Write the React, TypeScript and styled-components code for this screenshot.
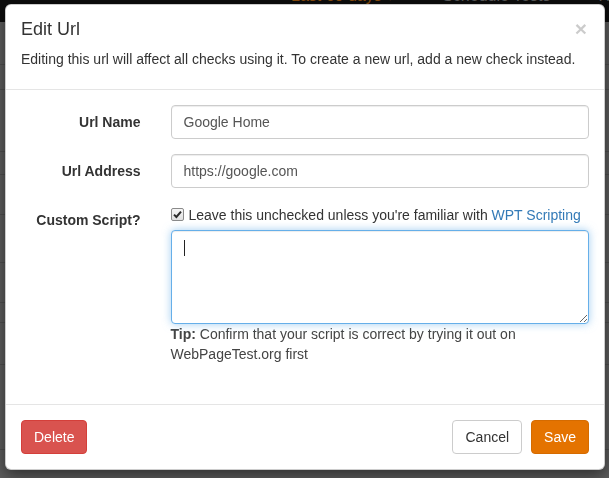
import React from 'react';
import styled, { createGlobalStyle } from 'styled-components';

const GlobalStyle = createGlobalStyle`
  html, body {
    margin: 0;
    padding: 0;
    overflow: hidden;
  }
  body {
    font-family: "Liberation Sans", Arial, Helvetica, sans-serif;
    font-size: 14px;
    line-height: 1.42857;
    color: #333;
    background: #5d5d5d;
  }
  * {
    box-sizing: border-box;
  }
`;

/* page behind the dialog, already dimmed by the backdrop */
const Page = styled.div`
  width: 609px;
  height: 478px;
  background: #5d5d5d;
  overflow: hidden;
`;

const NavBar = styled.div`
  height: 22px;
  background: #0d0d0d;
  display: flex;
  align-items: flex-start;
  padding-left: 291px;
  gap: 48px;
  overflow: hidden;
`;

const NavItem = styled.span<{ active?: boolean }>`
  margin-top: -13px;
  font-size: 16px;
  line-height: 18px;
  color: ${({ active }) => (active ? '#8a4c0c' : '#5a5a5a')};
  white-space: nowrap;
`;

const PageRow = styled.div<{ h: number }>`
  height: ${({ h }) => h}px;
  border-bottom: 1px solid #4f4f4f;
`;

const Backdrop = styled.div`
  position: fixed;
  inset: 0;
  padding: 4px 0 0 5px;
`;

const Dialog = styled.div`
  width: 600px;
  background: #fff;
  border: 1px solid rgba(0, 0, 0, 0.2);
  border-radius: 6px;
  box-shadow: 0 5px 15px rgba(0, 0, 0, 0.5);
  overflow: hidden;
`;

const Header = styled.div`
  padding: 15px;
  border-bottom: 1px solid #e5e5e5;
`;

const TitleRow = styled.div`
  display: flex;
  justify-content: space-between;
  align-items: flex-start;
`;

const Title = styled.h4`
  margin: 0;
  font-size: 18px;
  font-weight: 500;
  line-height: 1.1;
  color: #333;
`;

const Close = styled.button`
  margin: -2px 2px 0 0;
  padding: 0;
  border: 0;
  background: transparent;
  font-family: inherit;
  font-size: 21px;
  font-weight: bold;
  line-height: 1;
  color: #000;
  opacity: 0.2;
  cursor: pointer;
`;

const Intro = styled.p`
  margin: 9px 0 5px;
  line-height: 20px;
`;

const Body = styled.div`
  padding: 15px;
`;

const FormGroup = styled.div`
  display: grid;
  grid-template-columns: 119.5px 1fr;
  column-gap: 30px;
  margin-bottom: 15px;
`;

const Label = styled.label`
  padding-top: 7px;
  text-align: right;
  font-weight: bold;
  line-height: 20px;
  white-space: nowrap;
`;

const Input = styled.input`
  display: block;
  width: 100%;
  height: 34px;
  padding: 6px 12px;
  font-family: inherit;
  font-size: 14px;
  line-height: 20px;
  color: #555;
  background: #fff;
  border: 1px solid #ccc;
  border-radius: 4px;
  box-shadow: inset 0 1px 1px rgba(0, 0, 0, 0.075);
  outline: none;
`;

const CheckRow = styled.label`
  display: flex;
  align-items: center;
  gap: 5px;
  margin: 2px 0 5px;
  line-height: 20px;
  white-space: nowrap;
`;

const CheckBox = styled.span`
  display: inline-flex;
  align-items: center;
  justify-content: center;
  width: 13px;
  height: 13px;
  margin-top: -1px;
  border: 1px solid #8a8a8a;
  border-radius: 2px;
  background: linear-gradient(#f6f6f6, #e0e0e0);
`;

const Link = styled.a`
  color: #337ab7;
  text-decoration: none;
`;

const ScriptBox = styled.div`
  position: relative;
`;

const TextArea = styled.textarea`
  display: block;
  width: 100%;
  height: 94px;
  padding: 6px 12px;
  font-family: inherit;
  font-size: 14px;
  line-height: 20px;
  color: #555;
  border: 1px solid #66afe9;
  border-radius: 4px;
  box-shadow: inset 0 1px 1px rgba(0, 0, 0, 0.075), 0 0 8px rgba(102, 175, 233, 0.6);
  outline: none;
  resize: vertical;
`;

const Caret = styled.span`
  position: absolute;
  left: 13px;
  top: 10px;
  width: 1px;
  height: 16px;
  background: #222;
`;

const Help = styled.p`
  margin: 0 0 10px;
  line-height: 20px;
  color: #444;
`;

const Footer = styled.div`
  display: flex;
  align-items: center;
  padding: 15px;
  border-top: 1px solid #e5e5e5;
`;

const Spacer = styled.div`
  flex: 1;
`;

const variants = {
  danger: { bg: '#d9534f', border: '#d43f3a', color: '#fff' },
  default: { bg: '#fff', border: '#ccc', color: '#333' },
  primary: { bg: '#e47300', border: '#d56b00', color: '#fff' },
};

const Button = styled.button<{ variant: keyof typeof variants }>`
  height: 34px;
  padding: 6px 12px;
  margin-left: ${({ variant }) => (variant === 'primary' ? 9 : 0)}px;
  font-family: inherit;
  font-size: 14px;
  line-height: 20px;
  border-radius: 4px;
  border: 1px solid ${({ variant }) => variants[variant].border};
  background: ${({ variant }) => variants[variant].bg};
  color: ${({ variant }) => variants[variant].color};
  cursor: pointer;
`;

const pageRows = [43, 25, 62, 23, 40, 48, 40, 20, 42, 85];

export default function App() {
  return (
    <>
      <GlobalStyle />
      <Page>
        <NavBar>
          <NavItem active>Last 60 days ▾</NavItem>
          <NavItem>Schedule Tests</NavItem>
          <NavItem>Recent Tests</NavItem>
        </NavBar>
        {pageRows.map((h, i) => (
          <PageRow key={i} h={h} />
        ))}
      </Page>
      <Backdrop>
        <Dialog>
          <Header>
            <TitleRow>
              <Title>Edit Url</Title>
              <Close type="button">×</Close>
            </TitleRow>
            <Intro>Editing this url will affect all checks using it. To create a new url, add a new check instead.</Intro>
          </Header>
          <Body>
            <FormGroup>
              <Label>Url Name</Label>
              <Input defaultValue="Google Home" />
            </FormGroup>
            <FormGroup>
              <Label>Url Address</Label>
              <Input defaultValue="https://google.com" />
            </FormGroup>
            <FormGroup>
              <Label>Custom Script?</Label>
              <div>
                <CheckRow>
                  <CheckBox>
                    <svg width="9" height="9" viewBox="0 0 9 9">
                      <path d="M1 4.6 L3.4 7 L8 1.6" fill="none" stroke="#2b2b2b" strokeWidth="2" />
                    </svg>
                  </CheckBox>
                  <span>
                    Leave this unchecked unless you're familiar with <Link href="#">WPT Scripting</Link>
                  </span>
                </CheckRow>
                <ScriptBox>
                  <TextArea rows={4} />
                  <Caret />
                </ScriptBox>
                <Help>
                  <b>Tip:</b> Confirm that your script is correct by trying it out on WebPageTest.org first
                </Help>
              </div>
            </FormGroup>
          </Body>
          <Footer>
            <Button variant="danger">Delete</Button>
            <Spacer />
            <Button variant="default">Cancel</Button>
            <Button variant="primary">Save</Button>
          </Footer>
        </Dialog>
      </Backdrop>
    </>
  );
}
